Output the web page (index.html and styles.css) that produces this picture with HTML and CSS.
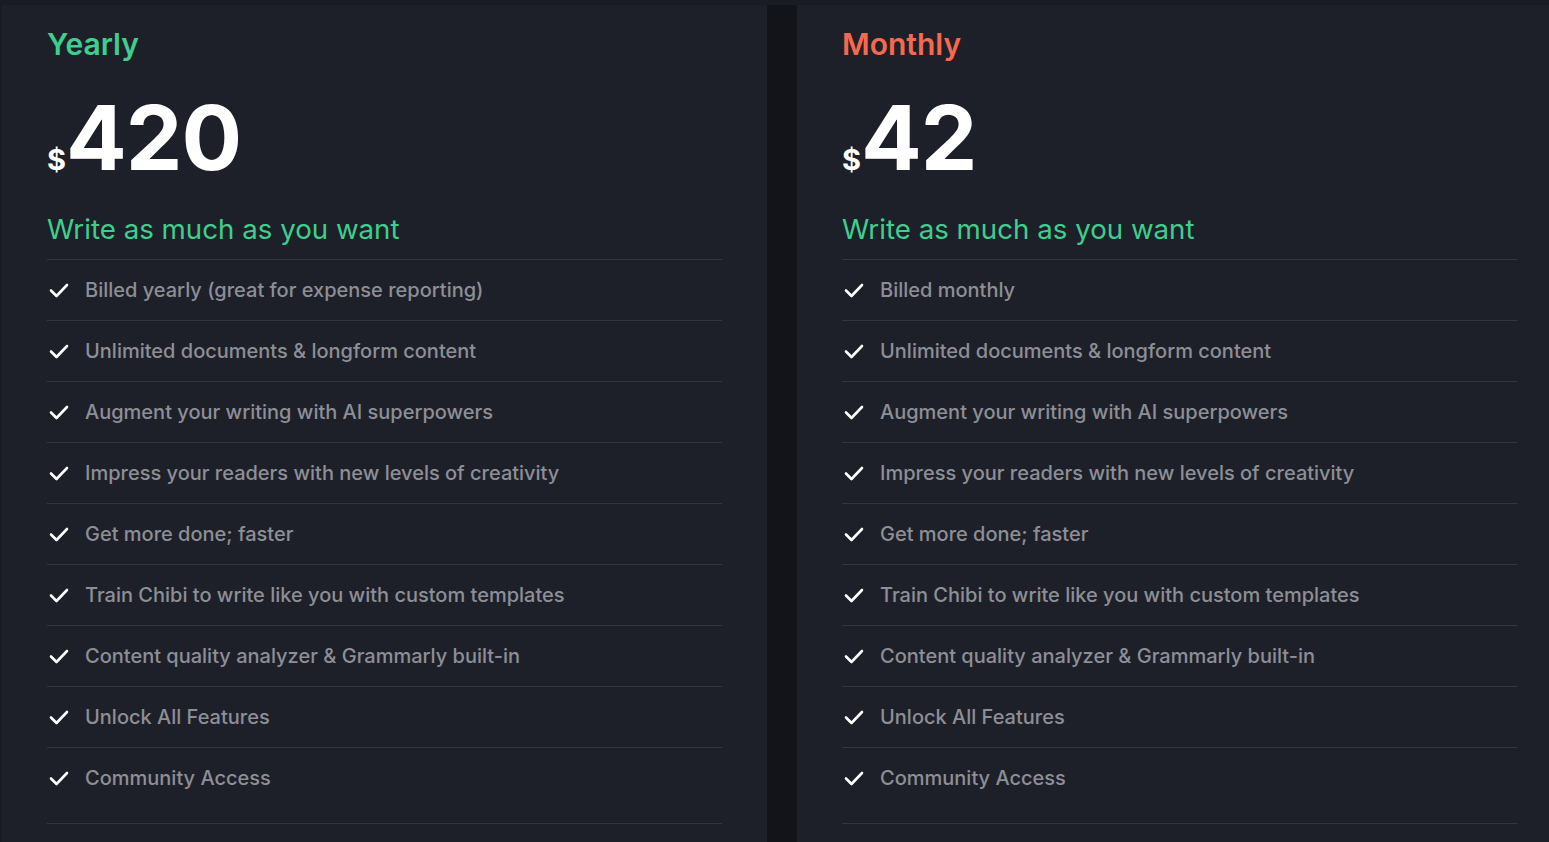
FILE: index.html
```html
<!DOCTYPE html>
<html lang="en">
<head>
  <meta charset="UTF-8">
  <meta name="viewport" content="width=device-width, initial-scale=1.0">
  <title>Pricing | Chibi</title>
  <link rel="stylesheet" href="styles.css">
</head>
<body>
  <div class="plans">
    <div class="plan">
      <h2 class="plan-name yearly">Yearly</h2>
      <div class="price"><span class="currency">$</span>420</div>
      <h3 class="plan-tagline">Write as much as you want</h3>
      <ul class="features">
        <li><svg class="check" viewBox="0 0 20 16"><path d="M2 8.5l5.5 5.5L18 3"/></svg>Billed yearly (great for expense reporting)</li>
        <li><svg class="check" viewBox="0 0 20 16"><path d="M2 8.5l5.5 5.5L18 3"/></svg>Unlimited documents &amp; longform content</li>
        <li><svg class="check" viewBox="0 0 20 16"><path d="M2 8.5l5.5 5.5L18 3"/></svg>Augment your writing with AI superpowers</li>
        <li><svg class="check" viewBox="0 0 20 16"><path d="M2 8.5l5.5 5.5L18 3"/></svg>Impress your readers with new levels of creativity</li>
        <li><svg class="check" viewBox="0 0 20 16"><path d="M2 8.5l5.5 5.5L18 3"/></svg>Get more done; faster</li>
        <li><svg class="check" viewBox="0 0 20 16"><path d="M2 8.5l5.5 5.5L18 3"/></svg>Train Chibi to write like you with custom templates</li>
        <li><svg class="check" viewBox="0 0 20 16"><path d="M2 8.5l5.5 5.5L18 3"/></svg>Content quality analyzer &amp; Grammarly built-in</li>
        <li><svg class="check" viewBox="0 0 20 16"><path d="M2 8.5l5.5 5.5L18 3"/></svg>Unlock All Features</li>
        <li><svg class="check" viewBox="0 0 20 16"><path d="M2 8.5l5.5 5.5L18 3"/></svg>Community Access</li>
      </ul>
    </div>

    <div class="plan">
      <h2 class="plan-name monthly">Monthly</h2>
      <div class="price"><span class="currency">$</span>42</div>
      <h3 class="plan-tagline">Write as much as you want</h3>
      <ul class="features">
        <li><svg class="check" viewBox="0 0 20 16"><path d="M2 8.5l5.5 5.5L18 3"/></svg>Billed monthly</li>
        <li><svg class="check" viewBox="0 0 20 16"><path d="M2 8.5l5.5 5.5L18 3"/></svg>Unlimited documents &amp; longform content</li>
        <li><svg class="check" viewBox="0 0 20 16"><path d="M2 8.5l5.5 5.5L18 3"/></svg>Augment your writing with AI superpowers</li>
        <li><svg class="check" viewBox="0 0 20 16"><path d="M2 8.5l5.5 5.5L18 3"/></svg>Impress your readers with new levels of creativity</li>
        <li><svg class="check" viewBox="0 0 20 16"><path d="M2 8.5l5.5 5.5L18 3"/></svg>Get more done; faster</li>
        <li><svg class="check" viewBox="0 0 20 16"><path d="M2 8.5l5.5 5.5L18 3"/></svg>Train Chibi to write like you with custom templates</li>
        <li><svg class="check" viewBox="0 0 20 16"><path d="M2 8.5l5.5 5.5L18 3"/></svg>Content quality analyzer &amp; Grammarly built-in</li>
        <li><svg class="check" viewBox="0 0 20 16"><path d="M2 8.5l5.5 5.5L18 3"/></svg>Unlock All Features</li>
        <li><svg class="check" viewBox="0 0 20 16"><path d="M2 8.5l5.5 5.5L18 3"/></svg>Community Access</li>
      </ul>
    </div>
  </div>
</body>
</html>
```

FILE: styles.css
```css
body {
  font-family: 'Inter', 'Liberation Sans', sans-serif;
  background-color: #1a1c24;
  margin: 0;
  overflow: hidden;
  height: 100vh;
}

.plans {
  display: flex;
  gap: 30px;
  margin: 5px 0 0 2px;
  background-color: #12141a;
  height: calc(100vh - 5px);
}

.plan {
  flex-shrink: 0;
  width: 765px;
  box-sizing: border-box;
  padding: 21px 45px 0;
  background-color: #1e2029;
}

.plan-name {
  margin: 0;
  font-size: 30px;
  font-weight: 600;
  line-height: 36px;
}

.yearly {
  color: #3ecf8e;
}

.monthly {
  color: #f7694f;
}

.price {
  margin-top: 26px;
  color: white;
  font-size: 90px;
  font-weight: 700;
  line-height: 100px;
  letter-spacing: -1px;
}

.currency {
  font-size: 29px;
  letter-spacing: 0;
}

.plan-tagline {
  margin: 0;
  color: #3ecf8e;
  font-size: 27.7px;
  font-weight: 400;
  line-height: 38px;
  padding-bottom: 11px;
  border-bottom: 1px solid #34363e;
}

.features {
  list-style: none;
  margin: 0;
  padding: 0;
}

.features li {
  display: flex;
  align-items: center;
  gap: 16px;
  height: 60px;
  border-bottom: 1px solid #34363e;
  color: #8d8f96;
  font-size: 20px;
  font-weight: 500;
  padding-left: 2px;
}

.features li:last-child {
  padding-bottom: 15px;
}

.check {
  width: 20px;
  height: 16px;
  flex-shrink: 0;
  fill: none;
  stroke: white;
  stroke-width: 2.6;
  stroke-linecap: round;
  stroke-linejoin: round;
}
```
